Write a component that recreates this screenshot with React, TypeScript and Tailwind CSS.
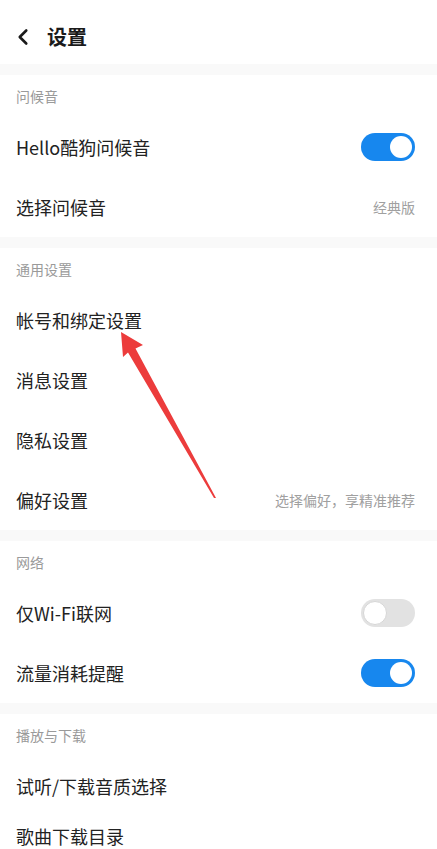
import { ChevronLeft } from 'lucide-react';

type Row = { label: string; right?: string; toggle?: boolean; short?: boolean };
type Section = { title: string; rows: Row[] };

const SECTIONS: Section[] = [
  {
    title: '问候音',
    rows: [
      { label: 'Hello酷狗问候音', toggle: true },
      { label: '选择问候音', right: '经典版' },
    ],
  },
  {
    title: '通用设置',
    rows: [
      { label: '帐号和绑定设置' },
      { label: '消息设置' },
      { label: '隐私设置' },
      { label: '偏好设置', right: '选择偏好，享精准推荐' },
    ],
  },
  {
    title: '网络',
    rows: [
      { label: '仅Wi-Fi联网', toggle: false },
      { label: '流量消耗提醒', toggle: true },
    ],
  },
  {
    title: '播放与下载',
    rows: [
      { label: '试听/下载音质选择' },
      { label: '歌曲下载目录', short: true },
    ],
  },
];

function Toggle({ on }: { on: boolean }) {
  return on ? (
    <div className="flex h-[28px] w-[54px] items-center justify-end rounded-full bg-[#1787ee] px-[3px]">
      <div className="h-[22px] w-[22px] rounded-full bg-white" />
    </div>
  ) : (
    <div className="flex h-[28px] w-[54px] items-center justify-start rounded-full bg-[#e2e2e2] px-[2px]">
      <div className="h-[24px] w-[24px] rounded-full border border-[#d6d6d6] bg-white" />
    </div>
  );
}

export default function App() {
  return (
    <div
      className="relative h-[849px] w-[437px] overflow-hidden bg-white"
      style={{ fontFamily: '"Noto Sans CJK SC", "Noto Sans", sans-serif' }}
    >
      {/* Header */}
      <div className="flex h-[64px] items-center gap-[11px] pl-[10px] pt-[10px]">
        <ChevronLeft className="h-[26px] w-[26px] text-[#1a1a1a]" strokeWidth={2.4} />
        <span className="text-[20px] font-bold text-[#1a1a1a]">设置</span>
      </div>

      {SECTIONS.map((section) => (
        <div key={section.title}>
          <div className="h-[11px] bg-[#f9f9f9]" />
          <div className="flex h-[42px] items-center px-[16px] text-[14px] text-[#9a9a9a]">
            {section.title}
          </div>
          {section.rows.map((row) => (
            <div
              key={row.label}
              className={`flex items-center justify-between pl-[16px] pr-[22px] ${
                row.short ? 'h-[40px]' : 'h-[60px]'
              }`}
            >
              <span className="text-[18px] leading-[18px] text-[#222222]">{row.label}</span>
              {row.toggle !== undefined && <Toggle on={row.toggle} />}
              {row.right && (
                <span className="text-[14px] text-[#a0a0a0]">{row.right}</span>
              )}
            </div>
          ))}
        </div>
      ))}

      {/* Red annotation arrow */}
      <svg
        className="pointer-events-none absolute left-0 top-0"
        width="437"
        height="849"
        viewBox="0 0 437 849"
      >
        <polygon
          points="121,332 143,345 135.5,348.5 216,498 214,498 128,352.5 123,357"
          fill="#ec3c3c"
        />
      </svg>
    </div>
  );
}
